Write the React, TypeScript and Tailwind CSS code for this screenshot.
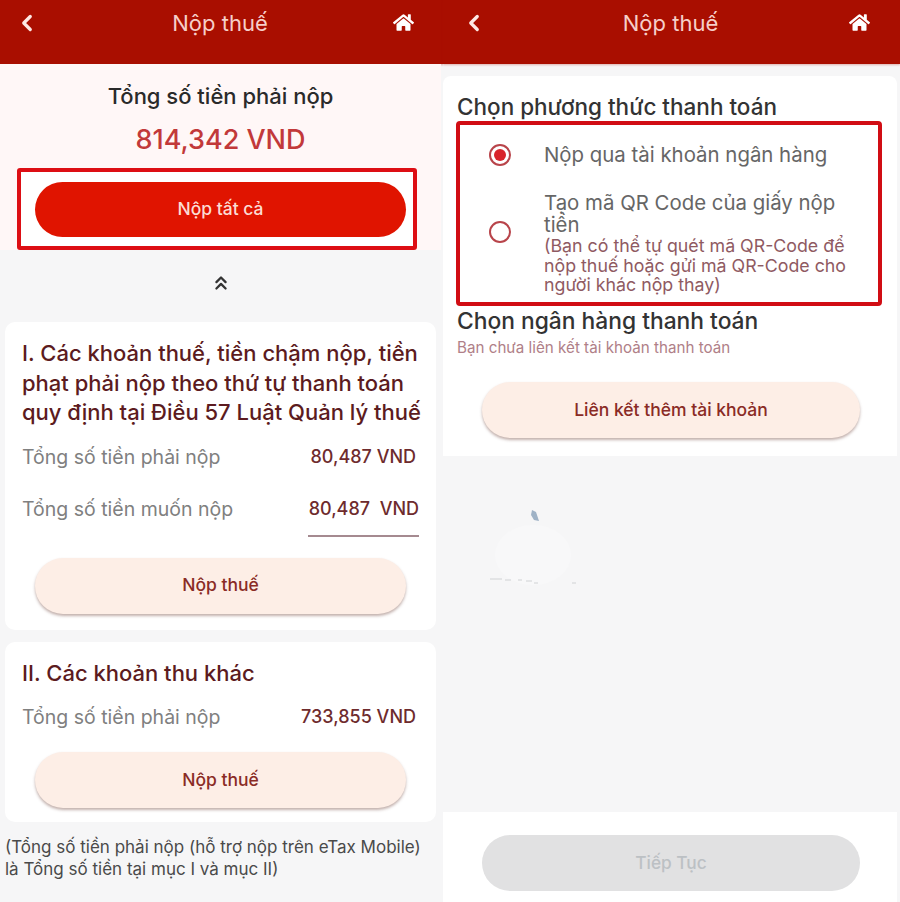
import React from 'react';
import { ChevronLeft, ChevronsUp } from 'lucide-react';
import { FaHome } from 'react-icons/fa';

const font = 'font-["Inter","Liberation_Sans",sans-serif]';

function Header({ className, titleClass }: { className: string; titleClass: string }) {
  return (
    <header className={`h-[64px] bg-[#a90e00] flex items-center justify-between pb-[19px] shadow-[0_1px_2px_rgba(169,14,0,0.3)] ${className}`}>
      <ChevronLeft className="w-[26px] h-[26px] text-[#fde8e4]" strokeWidth={3} />
      <span className={`text-[22px] leading-[28px] text-[#f6cfc9] ${titleClass}`}>Nộp thuế</span>
      <FaHome className="w-[21px] h-[21px] text-white" />
    </header>
  );
}

function PeachButton({ label, width = 'w-[371px]' }: { label: string; width?: string }) {
  return (
    <button className={`${width} h-[56px] rounded-full bg-[#fdeee6] shadow-[0_2px_3px_rgba(120,80,70,0.45)] text-[#8a2b25] text-[17.5px] font-medium flex items-center justify-center`}>
      {label}
    </button>
  );
}

function AmountRow({ label, value, className = '' }: { label: string; value: string; className?: string }) {
  return (
    <div className={`flex items-center justify-between ${className}`}>
      <span className="text-[#808080] text-[19.5px] leading-[24px]">{label}</span>
      <span className="text-[#6e2b2d] text-[18px] leading-[24px] font-medium whitespace-pre">{value}</span>
    </div>
  );
}

function TaxScreen() {
  return (
    <div className="w-[443px] h-[902px] bg-[#f6f6f7] flex flex-col">
      <Header className="pl-[14px] pr-[29px]" titleClass="ml-[7px]" />
      <div className="bg-[#fff7f7] h-[186px] w-[441px] flex flex-col items-center pt-[18px]">
        <div className="text-[22px] leading-[28px] text-[#2a2a2a] font-medium">Tổng số tiền phải nộp</div>
        <div className="mt-[12px] text-[27px] leading-[36px] text-[#c2393a] font-medium">814,342 VND</div>
        <div className="mt-[10px] self-start ml-[17px] w-[400px] h-[83px] border-[4px] border-[#dd0e14] rounded-[3px] bg-white flex items-center pl-[14px]">
          <button className="w-[371px] h-[55px] rounded-full bg-[#e01400] text-[#fbdcd4] text-[17.5px] font-medium">Nộp tất cả</button>
        </div>
      </div>
      <div className="h-[72px] w-[441px] flex items-start justify-center pt-[22px]">
        <ChevronsUp className="w-[22px] h-[22px] text-[#333]" strokeWidth={2.5} />
      </div>
      <section className="mx-[5px] w-[431px] h-[308px] bg-white rounded-[10px] px-[17px] pt-[17px] flex flex-col">
        <h2 className="text-[#5c1b20] text-[22px] leading-[29.5px] font-medium whitespace-nowrap">
          I. Các khoản thuế, tiền chậm nộp, tiền<br />phạt phải nộp theo thứ tự thanh toán<br />quy định tại Điều 57 Luật Quản lý thuế
        </h2>
        <AmountRow className="mt-[17px] pr-[3px]" label="Tổng số tiền phải nộp" value="80,487 VND" />
        <AmountRow className="mt-[28px]" label="Tổng số tiền muốn nộp" value="80,487  VND" />
        <div className="self-end w-[111px] h-[2px] bg-[#a58a90] mt-[14px]" />
        <div className="mt-[21px] flex justify-center"><PeachButton label="Nộp thuế" /></div>
      </section>
      <section className="mt-[12px] mx-[5px] w-[431px] h-[180px] bg-white rounded-[10px] px-[17px] pt-[16px] flex flex-col">
        <h2 className="text-[#5c1b20] text-[22px] leading-[30px] font-medium">II. Các khoản thu khác</h2>
        <AmountRow className="mt-[17px] pr-[3px]" label="Tổng số tiền phải nộp" value="733,855 VND" />
        <div className="mt-[23px] flex justify-center"><PeachButton label="Nộp thuế" /></div>
      </section>
      <p className="mt-[14px] px-[5px] text-[#4a4a4a] text-[17px] leading-[22px] whitespace-nowrap">
        (Tổng số tiền phải nộp (hỗ trợ nộp trên eTax Mobile)<br />là Tổng số tiền tại mục I và mục II)
      </p>
    </div>
  );
}

function Radio({ checked, className = '' }: { checked?: boolean; className?: string }) {
  return (
    <span className={`w-[22px] h-[22px] rounded-full border-[2.5px] border-[#b8444a] flex items-center justify-center shrink-0 bg-white ${className}`}>
      {checked && <span className="w-[12px] h-[12px] rounded-full bg-[#d8232a]" />}
    </span>
  );
}

function PaymentScreen() {
  return (
    <div className="relative w-[457px] h-[902px] bg-[#f6f6f7] flex flex-col">
      <Header className="pl-[18px] pr-[30px]" titleClass="ml-[5px]" />
      <section className="mt-[12px] w-[454px] h-[380px] bg-white rounded-t-[8px] flex flex-col pt-[17px]">
        <h2 className="pl-[14px] text-[#333] text-[22.5px] leading-[28px] font-medium">Chọn phương thức thanh toán</h2>
        <div className="ml-[13px] w-[426px] h-[185px] border-[4px] border-[#d10d14] rounded-[4px] flex flex-col">
          <div className="flex items-center pl-[29px] pt-[17px]">
            <Radio checked />
            <span className="ml-[33px] text-[#666] text-[20.4px] leading-[26px]">Nộp qua tài khoản ngân hàng</span>
          </div>
          <div className="flex items-start pl-[29px] mt-[24px]">
            <Radio className="mt-[29px]" />
            <div className="ml-[33px]">
              <div className="text-[#666] text-[20.4px] leading-[22px] whitespace-nowrap">Tạo mã QR Code của giấy nộp<br />tiền</div>
              <div className="text-[#8f5a62] text-[17.8px] leading-[19.5px] whitespace-nowrap">(Bạn có thể tự quét mã QR-Code để<br />nộp thuế hoặc gửi mã QR-Code cho<br />người khác nộp thay)</div>
            </div>
          </div>
        </div>
        <h2 className="pl-[14px] text-[#333] text-[22.8px] leading-[30px] font-medium">Chọn ngân hàng thanh toán</h2>
        <div className="pl-[14px] mt-[3px] text-[#b08088] text-[15.2px] leading-[18px] whitespace-nowrap">Bạn chưa liên kết tài khoản thanh toán</div>
        <div className="mt-[25px] pl-[39px]"><PeachButton label="Liên kết thêm tài khoản" width="w-[378px]" /></div>
      </section>
      <div className="flex-1" />
      <footer className="h-[90px] w-[454px] bg-white pt-[23px] pl-[39px]">
        <button className="w-[378px] h-[56px] rounded-full bg-[#e1e1e2] text-[#bcc0c4] text-[17.3px] font-medium">Tiếp Tục</button>
      </footer>
      {/* faint leftover artwork in the empty area */}
      <svg className="absolute left-[45px] top-[505px]" width="95" height="85" viewBox="0 0 95 85" fill="none">
        <ellipse cx="45" cy="50" rx="38" ry="30" fill="#f8f8f9" />
        <path d="M44 5l4 2 3 9-5-1-3-5z" fill="#9fb2c6" />
        <path d="M2 74h12M17 75h6M30 75h4M38 76h6M46 78h4M84 78h4" stroke="#d0d2d4" strokeWidth="1" />
      </svg>
    </div>
  );
}

export default function App() {
  return (
    <div className={`w-[900px] h-[902px] flex bg-white overflow-hidden ${font}`}>
      <TaxScreen />
      <PaymentScreen />
    </div>
  );
}
